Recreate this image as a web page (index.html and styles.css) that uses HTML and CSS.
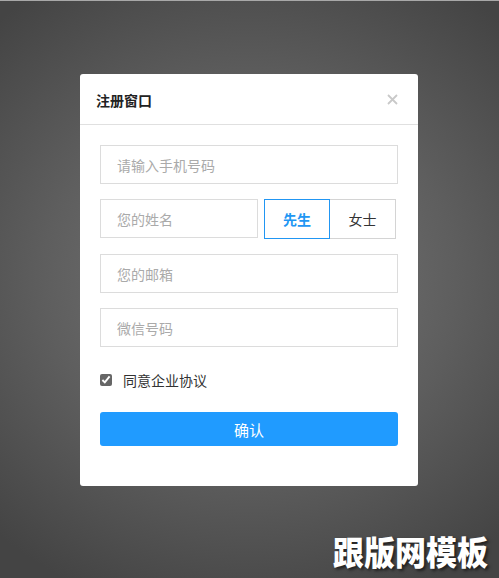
FILE: index.html
```html
<!DOCTYPE html>
<html lang="zh">
<head>
<meta charset="utf-8">
<link rel="stylesheet" href="styles.css">
</head>
<body>
<div class="page">
  <div class="modal">
    <div class="modal-header">
      <span class="title">注册窗口</span>
      <svg class="close" width="11" height="11" viewBox="0 0 11 11"><path d="M1 1L10 10M10 1L1 10" stroke="#c9c9c9" stroke-width="1.8" fill="none"/></svg>
    </div>
    <div class="modal-body">
      <div class="field"><input class="input" placeholder="请输入手机号码"></div>
      <div class="field row">
        <input class="input name" placeholder="您的姓名">
        <div class="gender">
          <button class="g-btn active">先生</button>
          <button class="g-btn">女士</button>
        </div>
      </div>
      <div class="field"><input class="input" placeholder="您的邮箱"></div>
      <div class="field"><input class="input" placeholder="微信号码"></div>
      <label class="agree"><input type="checkbox" checked class="check"><span>同意企业协议</span></label>
      <button class="submit">确认</button>
    </div>
  </div>
  <div class="watermark">跟版网模板</div>
</div>
</body>
</html>
```
FILE: styles.css
```css
* { box-sizing: border-box; }
html, body { margin: 0; padding: 0; height: 100%; }
body {
  font-family: "Microsoft YaHei", "Noto Sans CJK SC", sans-serif;
  background: radial-gradient(ellipse 75% 60% at 50% 48%, #7a7a7a 0%, #5e5e5e 55%, #444 100%);
  overflow: hidden;
}
.page {
  position: relative;
  height: 578px;
  border-top: 1px solid #a8a8a8;
  padding-top: 73px;
}
.modal {
  width: 338px;
  height: 412px;
  margin-left: 80px;
  background: #fff;
  border-radius: 3px;
}
.modal-header {
  height: 51px;
  border-bottom: 1px solid #e0e0e0;
  display: flex;
  align-items: center;
  justify-content: space-between;
  padding: 0 20px 0 16px;
}
.title { font-size: 14px; font-weight: bold; color: #222; margin-top: 2px; }
.close { display: block; margin-top: 1px; }
.modal-body { padding: 20px 20px 0 20px; }
.field { margin-bottom: 15px; }
.row { display: flex; align-items: flex-start; justify-content: space-between; }
.input {
  display: block;
  width: 298px;
  height: 39px;
  border: 1px solid #dcdcdc;
  padding: 0 16px;
  font-family: inherit;
  font-size: 14px;
  color: #333;
  outline: none;
}
.input::placeholder { color: #aaa; }
.input.name { width: 158px; }
.gender { display: flex; margin-right: 2px; }
.g-btn {
  width: 66px;
  height: 40px;
  background: #fff;
  border: 1px solid #d4d4d4;
  font-family: inherit;
  font-size: 14px;
  color: #333;
  padding: 0;
}
.g-btn + .g-btn { border-left: none; }
.g-btn.active { border-color: #2196f3; color: #2196f3; font-weight: bold; }
.agree {
  display: flex;
  align-items: center;
  margin-top: 23px;
  font-size: 14px;
  color: #333;
}
.check { margin: 0 11px 0 0; width: 12px; height: 12px; accent-color: #666; }
.submit {
  display: block;
  width: 298px;
  height: 34px;
  margin-top: 22px;
  border: none;
  border-radius: 3px;
  background: #209bff;
  color: #fff;
  font-family: inherit;
  font-size: 15px;
}
.watermark {
  position: absolute;
  right: 11px;
  bottom: 5px;
  font-size: 31px;
  font-weight: 900;
  color: #fff;
  transform: scaleY(1.08);
  text-shadow: 2px 2px 3px rgba(0,0,0,0.6);
}
```
